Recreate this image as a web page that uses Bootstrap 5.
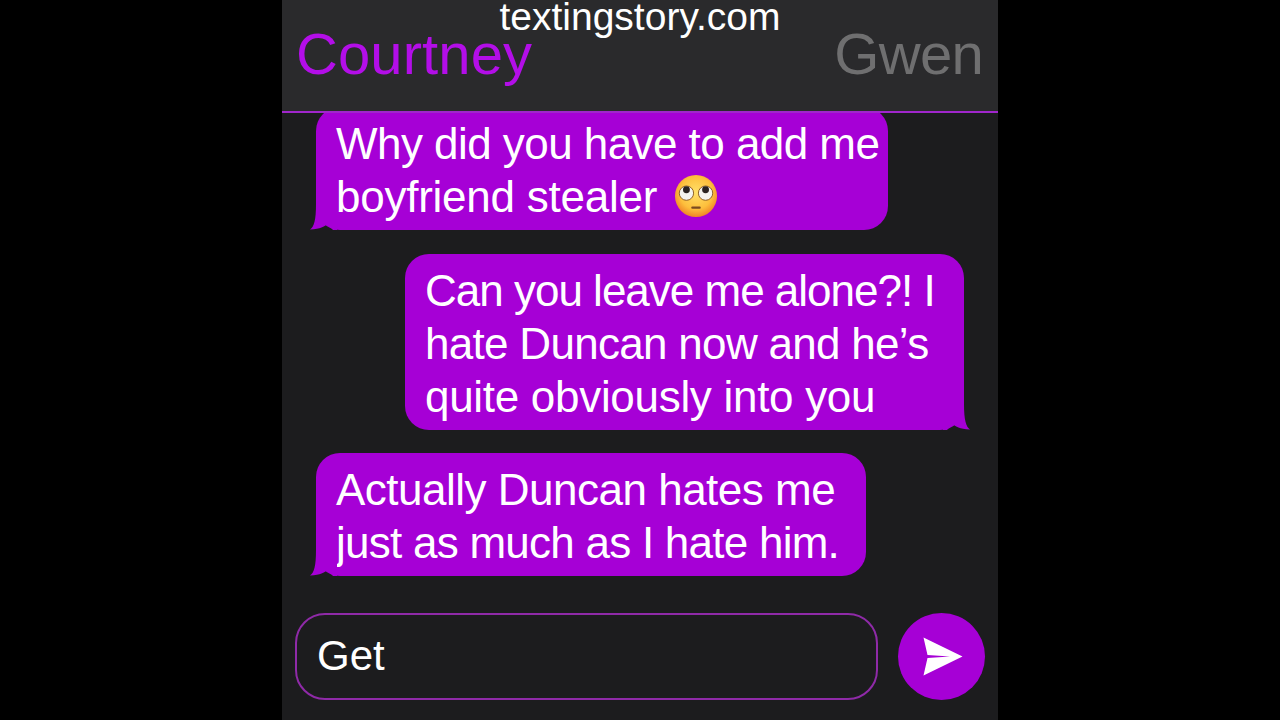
<!DOCTYPE html>
<html lang="en">
<head>
<meta charset="utf-8">
<title>textingstory.com</title>
<link href="https://cdn.jsdelivr.net/npm/bootstrap@5.3.0/dist/css/bootstrap.min.css" rel="stylesheet">
<style>
html,body{height:100%;margin:0;background:#000;overflow:hidden}
body{font-family:"Liberation Sans",Arial,sans-serif;color:#fff}
.phone{width:716px;height:720px;background:#1c1c1e;position:relative}
.watermark{position:absolute;top:0;left:0;right:0;text-align:center;font-size:39px;line-height:33px;padding-bottom:4px;color:#fff;z-index:3}
.chat-head{height:113px;background:#2a2a2c;border-bottom:2px solid #a026cc;padding:24px 15px 0 14px;position:relative;z-index:2}
.who{font-size:58px;line-height:60px}
.who-on{color:#b30ee8;letter-spacing:.1px}
.who-off{color:#6f6f70;letter-spacing:-.7px}
.thread{overflow:hidden;padding-left:34px;padding-right:34px}
.bubble{position:relative;background:#a600d6;border-radius:24px;padding:10px 0 7px 20px;font-size:44px;line-height:53px;white-space:nowrap}
.b1{width:572px;margin-top:-6px}
.b2{width:559px;margin-top:24px;margin-left:89px}
.b3{width:550px;margin-top:23px}
.t1{letter-spacing:-.55px}
.t2{letter-spacing:-.25px}
.t3{letter-spacing:-1px}
.t4{letter-spacing:-.7px}
.t5{letter-spacing:-.3px}
.t6{letter-spacing:-.5px}
.t7{letter-spacing:-.75px}
.tail{position:absolute;bottom:0;width:28px;height:26px;fill:#a600d6;display:block}
.tail-l{left:-7px}
.tail-r{right:-7px}
.eye-roll{width:44px;height:44px;vertical-align:-6px;margin-left:5px}
.compose{padding:0 13px 20px 13px;gap:20px}
.field{height:87px;border:2px solid #8f2aa8;border-radius:30px;padding-left:20px;font-size:42px;line-height:81px}
.send{width:87px;height:87px;background:#a600d6;border-radius:50%;flex:0 0 87px}
</style>
</head>
<body>
<div class="d-flex justify-content-center h-100">
  <div class="phone d-flex flex-column">
    <div class="watermark">textingstory.com</div>
    <div class="chat-head d-flex justify-content-between align-items-start">
      <span class="who who-on">Courtney</span>
      <span class="who who-off">Gwen</span>
    </div>
    <div class="thread flex-grow-1">
      <div class="bubble b1"><span class="t1">Why did you have to add me</span><br><span class="t2">boyfriend stealer</span>
        <svg class="eye-roll" viewBox="0 0 46 46" aria-label="face with rolling eyes">
          <defs><radialGradient id="fc" cx=".5" cy=".42" r=".6"><stop offset="0" stop-color="#ffe069"/><stop offset=".65" stop-color="#fdbf3c"/><stop offset="1" stop-color="#ee7d24"/></radialGradient></defs>
          <circle cx="23" cy="23" r="22" fill="url(#fc)"/>
          <circle cx="13" cy="20" r="7.500" fill="#f4f3ee" stroke="#8a5a20" stroke-width="1"/>
          <circle cx="33" cy="20" r="7.500" fill="#f4f3ee" stroke="#8a5a20" stroke-width="1"/>
          <circle cx="13" cy="16.500" r="3.600" fill="#2b2320"/>
          <circle cx="33" cy="16.500" r="3.600" fill="#2b2320"/>
          <rect x="18" y="34" width="10" height="2.400" rx="1.200" fill="#7a4a20"/>
        </svg>
        <svg class="tail tail-l" viewBox="0 0 28 26"><path d="M1 25.500C5 23 7 16 7 0H28V26H24C22 24 20 21 18 21C15 21.500 12 25.500 1 25.500Z"/></svg>
      </div>
      <div class="bubble b2"><span class="t3">Can you leave me alone?! I</span><br><span class="t4">hate Duncan now and he’s</span><br><span class="t5">quite obviously into you</span>
        <svg class="tail tail-r" viewBox="0 0 28 26"><path d="M27 25.500C23 23 21 16 21 0H0V26H4C6 24 8 21 10 21C13 21.500 16 25.500 27 25.500Z"/></svg>
      </div>
      <div class="bubble b3"><span class="t6">Actually Duncan hates me</span><br><span class="t7">just as much as I hate him.</span>
        <svg class="tail tail-l" viewBox="0 0 28 26"><path d="M1 25.500C5 23 7 16 7 0H28V26H24C22 24 20 21 18 21C15 21.500 12 25.500 1 25.500Z"/></svg>
      </div>
    </div>
    <div class="compose d-flex align-items-center">
      <div class="field flex-grow-1">Get</div>
      <div class="send d-flex align-items-center justify-content-center">
        <svg width="44" height="44" viewBox="0 0 44 44" aria-label="send"><path d="M3.500 2.500L42.500 21.500L3.500 40.500L7.500 23L30 21.500L7.500 20Z" fill="#fff"/></svg>
      </div>
    </div>
  </div>
</div>
<script src="https://cdn.jsdelivr.net/npm/bootstrap@5.3.0/dist/js/bootstrap.bundle.min.js"></script>
</body>
</html>
